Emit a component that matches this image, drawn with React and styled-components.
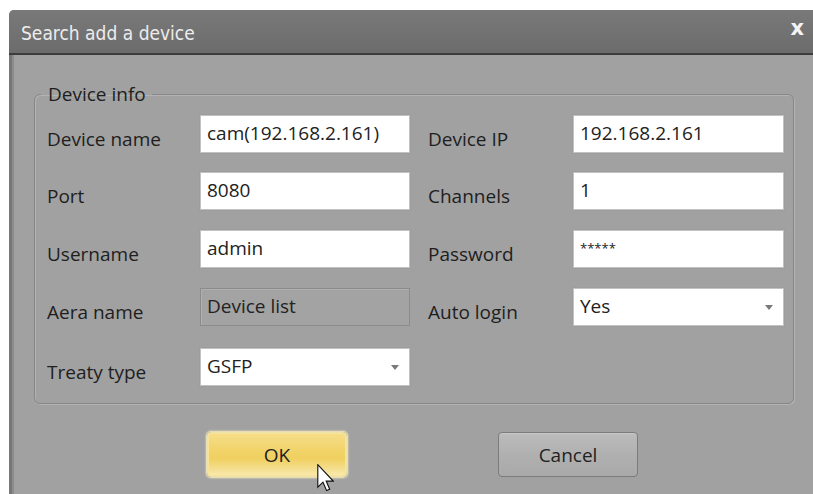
import React from "react";
import styled, { createGlobalStyle } from "styled-components";

const GlobalStyle = createGlobalStyle`
  html, body {
    margin: 0;
    padding: 0;
    background: #ffffff;
    overflow: hidden;
  }
  body {
    font-family: "Open Sans", "Noto Sans", "DejaVu Sans", sans-serif;
    color: #1e1e1e;
  }
`;

const Page = styled.div`
  position: relative;
  display: flow-root;
`;

const Window = styled.div`
  margin: 10px 0 0 9px;
  width: 812px;
  height: 490px;
  background: #a1a1a1;
  border-radius: 5px 5px 0 0;
  overflow: hidden;
  display: flex;
  flex-direction: column;
`;

const TitleBar = styled.div`
  flex: none;
  height: 43px;
  display: flex;
  align-items: center;
  justify-content: space-between;
  padding: 0 17px 0 12px;
  background: linear-gradient(#797979, #6c6c6c);
  border-bottom: 2px solid #3c3c3c;
`;

const Title = styled.span`
  font-family: "DejaVu Sans", sans-serif;
  font-stretch: condensed;
  font-size: 19px;
  color: #ececec;
  padding-top: 2px;
`;

const Close = styled.span`
  font-family: "DejaVu Sans", sans-serif;
  font-weight: bold;
  font-size: 21px;
  line-height: 1;
  color: #f4f4f4;
  padding-bottom: 6px;
`;

const Body = styled.div`
  flex: 1;
  display: flex;
  flex-direction: column;
  border-left: 3px solid #777777;
  box-shadow: inset 2px 0 0 #8c8c8c;
  padding: 27px 0 0 22px;
`;

const Group = styled.fieldset`
  margin: 0;
  width: 760px;
  box-sizing: border-box;
  padding: 9px 8px 17px 12px;
  border: 1px solid #878787;
  border-radius: 6px;
  box-shadow: inset 1px 1px 0 #b3b3b3, 1px 1px 0 #b3b3b3;
`;

const Legend = styled.legend`
  margin-left: -6px;
  padding: 0 6px 0 7px;
  font-size: 19px;
  line-height: 24px;
  color: #1e1e1e;
`;

const Grid = styled.div`
  display: grid;
  grid-template-columns: 153px 210px 163px 211px;
  grid-template-rows: 38px 39px 39px 41px 38px;
  row-gap: 19px;
`;

const Label = styled.div`
  font-size: 19px;
  line-height: 24px;
  padding-top: 12px;
  padding-left: ${(p) => (p.$right ? "18px" : "0")};
  white-space: nowrap;
`;

const Field = styled.div`
  position: relative;
  box-sizing: border-box;
  height: 38px;
  padding: 5px 0 0 6px;
  font-size: ${(p) => (p.$masked ? "13px" : "19px")};
  line-height: 24px;
  white-space: nowrap;
  background: ${(p) => (p.$disabled ? "#a3a3a3" : "#ffffff")};
  border: 1px solid ${(p) => (p.$disabled ? "#8b8b8b" : "#c2c2c2")};
  box-shadow: ${(p) =>
    p.$disabled ? "inset 1px 1px 0 #b0b0b0" : "0 0 0 1px rgba(150,150,150,0.35)"};
  color: #222;
`;

const Caret = styled.svg`
  position: absolute;
  right: 10px;
  top: 16px;
`;

const Buttons = styled.div`
  display: flex;
  padding: 28px 0 0 173px;
  gap: 151px;
`;

const Button = styled.div`
  box-sizing: border-box;
  width: 140px;
  height: 45px;
  display: flex;
  align-items: center;
  justify-content: center;
  font-size: 19px;
  border-radius: 4px;
  color: #222;
  background: ${(p) =>
    p.$primary
      ? "linear-gradient(#f6de8a 0%, #f1d266 45%, #f0d060 60%, #f8eab0 100%)"
      : "linear-gradient(#bcbcbc 0%, #b0b0b0 50%, #a9a9a9 100%)"};
  border: 1px solid ${(p) => (p.$primary ? "#efe2a6" : "#7b7b7b")};
  box-shadow: ${(p) =>
    p.$primary
      ? "0 0 2px 1px #fff3c0, inset 0 0 0 1px #f7e49a"
      : "inset 0 1px 0 #c8c8c8"};
`;

const Pointer = styled.svg`
  position: absolute;
  left: 317px;
  top: 464px;
`;

function DropCaret() {
  return (
    <Caret width="8" height="5" viewBox="0 0 8 5">
      <path d="M0 0 H8 L4 5 Z" fill="#7a7a7a" />
    </Caret>
  );
}

const rows = [
  ["Device name", { value: "cam(192.168.2.161)" }, "Device IP", { value: "192.168.2.161" }],
  ["Port", { value: "8080" }, "Channels", { value: "1" }],
  ["Username", { value: "admin" }, "Password", { value: "*****", masked: true }],
  ["Aera name", { value: "Device list", disabled: true }, "Auto login", { value: "Yes", select: true }],
  ["Treaty type", { value: "GSFP", select: true }, null, null],
];

function Input({ value, disabled, select, masked }) {
  return (
    <Field $disabled={disabled} $masked={masked}>
      {value}
      {select && <DropCaret />}
    </Field>
  );
}

export default function App() {
  return (
    <Page>
      <GlobalStyle />
      <Window>
        <TitleBar>
          <Title>Search add a device</Title>
          <Close>x</Close>
        </TitleBar>
        <Body>
          <Group>
            <Legend>Device info</Legend>
            <Grid>
              {rows.map(([l1, f1, l2, f2]) => (
                <React.Fragment key={l1}>
                  <Label>{l1}</Label>
                  <Input {...f1} />
                  {l2 ? <Label $right>{l2}</Label> : <div />}
                  {f2 ? <Input {...f2} /> : <div />}
                </React.Fragment>
              ))}
            </Grid>
          </Group>
          <Buttons>
            <Button $primary>OK</Button>
            <Button>Cancel</Button>
          </Buttons>
        </Body>
      </Window>
      <Pointer width="17" height="28" viewBox="0 0 12 20">
        <path
          d="M0.5 0.5 L0.5 16.5 L4.2 13 L6.8 19 L9 18 L6.5 12.2 L11.5 12.2 Z"
          fill="#ffffff"
          stroke="#111"
          strokeWidth="0.8"
        />
      </Pointer>
    </Page>
  );
}
